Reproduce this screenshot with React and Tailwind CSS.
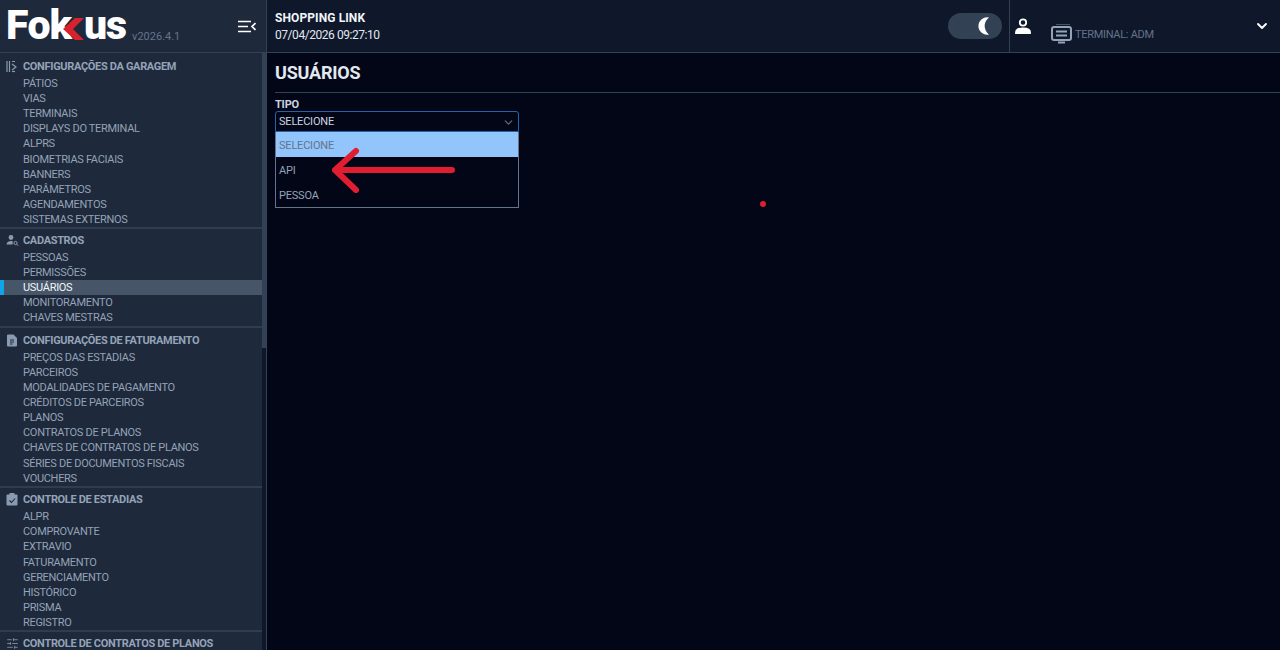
import React from "react";
import { ChevronDown, SlidersHorizontal } from "lucide-react";

const sections = [
  {
    title: "CONFIGURAÇÕES DA GARAGEM",
    icon: "garage",
    cls: "pt-[6px]",
    items: ["PÁTIOS", "VIAS", "TERMINAIS", "DISPLAYS DO TERMINAL", "ALPRS", "BIOMETRIAS FACIAIS", "BANNERS", "PARÂMETROS", "AGENDAMENTOS", "SISTEMAS EXTERNOS"],
  },
  {
    title: "CADASTROS",
    icon: "people",
    cls: "border-t-2 border-[#2f3d52] pt-[3.9px]",
    items: ["PESSOAS", "PERMISSÕES", "USUÁRIOS", "MONITORAMENTO", "CHAVES MESTRAS"],
  },
  {
    title: "CONFIGURAÇÕES DE FATURAMENTO",
    icon: "doc",
    cls: "border-t-2 border-[#2f3d52] pt-[5.3px]",
    items: ["PREÇOS DAS ESTADIAS", "PARCEIROS", "MODALIDADES DE PAGAMENTO", "CRÉDITOS DE PARCEIROS", "PLANOS", "CONTRATOS DE PLANOS", "CHAVES DE CONTRATOS DE PLANOS", "SÉRIES DE DOCUMENTOS FISCAIS", "VOUCHERS"],
  },
  {
    title: "CONTROLE DE ESTADIAS",
    icon: "check",
    cls: "border-t-2 border-[#2f3d52] pt-[4.4px]",
    items: ["ALPR", "COMPROVANTE", "EXTRAVIO", "FATURAMENTO", "GERENCIAMENTO", "HISTÓRICO", "PRISMA", "REGISTRO"],
  },
  {
    title: "CONTROLE DE CONTRATOS DE PLANOS",
    icon: "sliders",
    cls: "border-t-2 border-[#2f3d52] pt-[3.6px]",
    items: [],
  },
];

const SectionIcon = ({ type }) => {
  if (type === "garage")
    return (
      <svg width="13" height="13" viewBox="0 0 13 13" fill="none" stroke="#8a9bb0" strokeWidth="1.2">
        <path d="M1 1v11M3.5 1v11M6 1.5h3M6 4l4 3-4 3" />
        <path d="M6 11.5h3" />
      </svg>
    );
  if (type === "people")
    return (
      <svg width="13" height="13" viewBox="0 0 13 13" fill="#8a9bb0">
        <circle cx="5" cy="3.5" r="2.4" />
        <path d="M0.5 10.5c0-2.4 2-3.6 4.5-3.6 .6 0 1.1 .1 1.6 .2v3.4z" />
        <circle cx="9.5" cy="9" r="1.6" fill="none" stroke="#8a9bb0" />
        <path d="M10.7 10.2l1.6 1.6" stroke="#8a9bb0" />
      </svg>
    );
  if (type === "doc")
    return (
      <svg width="12" height="13" viewBox="0 0 12 13">
        <path d="M2 0.5h5.5l3.5 3.5v7.5a1 1 0 0 1-1 1H2a1 1 0 0 1-1-1v-10a1 1 0 0 1 1-1z" fill="#8a9bb0" />
        <path d="M4 6h4M4 8h4M4 10h2.5" stroke="#1e293b" strokeWidth="1" />
      </svg>
    );
  if (type === "check")
    return (
      <svg width="12" height="13" viewBox="0 0 12 13">
        <rect x="0.5" y="1.5" width="11" height="11" rx="1" fill="#8a9bb0" />
        <rect x="3.5" y="0" width="5" height="2.5" rx="0.5" fill="#8a9bb0" />
        <path d="M3.5 7.5l2 2 3.5-4" stroke="#1e293b" strokeWidth="1.1" fill="none" />
      </svg>
    );
  return <SlidersHorizontal size={13} color="#8a9bb0" strokeWidth={1.5} />;
};

const Logo = () => (
  <div className="flex items-end mb-[2px] -ml-[2px]">
    <div className="flex items-end h-[42px] text-white font-['Roboto',sans-serif] font-black text-[41px] leading-[42px]">
      <span>F</span>
      <span className="-ml-[1px]">o</span>
      <span className="-ml-[1px]">k</span>
      <svg width="21" height="22" viewBox="0 0 21 22" className="-ml-[9px] mb-[6px]">
        <path d="M21 0h-9L0 11l12 11h9L10 11z" fill="#d8232f" />
      </svg>
      <span>u</span>
      <span className="-ml-[1px]">s</span>
    </div>
    <span className="text-[11px] leading-none text-[#64748b] ml-[5px] mb-[4px]">v2026.4.1</span>
  </div>
);

export default function App() {
  return (
    <div className="h-[650px] w-[1280px] overflow-hidden flex flex-col bg-[#020617] font-['Roboto',sans-serif]">
      {/* ================= HEADER ================= */}
      <div className="h-[53px] flex shrink-0 bg-[#0f172a] border-b border-[#334155]">
        <div className="w-[267px] shrink-0 bg-[#1e293b] border-r border-[#334155] flex items-center justify-between pl-2 pr-[10px]">
          <Logo />
          <svg width="18" height="13" viewBox="0 0 18 13" fill="none" stroke="#fff" strokeWidth="1.7">
            <path d="M0 1.5h13M0 6.5h10M0 11.5h13M17.5 3l-3.5 3.5 3.5 3.5" />
          </svg>
        </div>
        <div className="flex-1 flex items-center justify-between pl-2">
          <div className="text-[12px] leading-[17px] pt-[2px]">
            <div className="font-bold text-[#f1f5f9] tracking-[0.1px]">SHOPPING LINK</div>
            <div className="text-[#e2e8f0] tracking-[-0.45px]">07/04/2026 09:27:10</div>
          </div>
          <div className="flex items-center h-full">
            <div className="w-[54px] h-[26px] rounded-full bg-[#334155] flex items-center justify-end pr-[10px] mr-[7px]">
              <svg width="14" height="18" viewBox="0 0 14 18">
                <path d="M11 0.5A8.7 8.7 0 1 0 11 17.5A10.5 10.5 0 0 1 11 0.5z" fill="#fff" />
              </svg>
            </div>
            <div className="h-full w-[271px] border-l border-[#334155] flex pl-[5px] pr-[10px]">
              <svg width="16" height="16" viewBox="0 0 16 16" className="mt-[18px]" fill="none" stroke="#fff" strokeWidth="1.8">
                <circle cx="8" cy="4.5" r="3.2" />
                <path d="M1 15v-1c0-2.4 3-3.6 7-3.6s7 1.2 7 3.6v1z" fill="#fff" />
              </svg>
              <div className="flex items-center ml-[20px] mt-[24px] h-[21px]">
                <svg width="21" height="21" viewBox="0 0 21 21" fill="none" stroke="#94a3b8" strokeWidth="2">
                  <path d="M5 0.5h14" stroke="#475569" strokeWidth="1" />
                  <rect x="1" y="3" width="19" height="13" rx="2" />
                  <path d="M5 7.5h11M5 11.5h11" />
                  <path d="M7 18.5h7" />
                </svg>
                <span className="text-[11px] text-[#64748b] ml-[3px] mt-[1px] tracking-[-0.3px]">TERMINAL: ADM</span>
              </div>
              <ChevronDown size={16} color="#fff" strokeWidth={2.8} className="ml-auto mt-[18px]" />
            </div>
          </div>
        </div>
      </div>

      <div className="flex-1 flex min-h-0">
        {/* ================= SIDEBAR ================= */}
        <div className="w-[267px] shrink-0 bg-[#1e293b] border-r border-[#334155] flex overflow-hidden">
          <div className="w-[262px] shrink-0">
            {sections.map((s) => (
              <div key={s.title} className={s.cls}>
                <div className="flex items-center h-[15px] pl-[6px] mb-[2px] leading-none">
                  <span className="w-[17px] shrink-0 flex items-center">
                    <SectionIcon type={s.icon} />
                  </span>
                  <span className="text-[11px] font-bold text-[#94a3b8] tracking-[-0.33px]">{s.title}</span>
                </div>
                {s.items.map((it) => {
                  const active = it === "USUÁRIOS";
                  return (
                    <div
                      key={it}
                      className={
                        active
                          ? "h-[15.11px] leading-[15px] text-[11px] tracking-[-0.3px] pl-[23px] bg-[#475569] text-[#f1f5f9] relative"
                          : "h-[15.11px] leading-[15px] text-[11px] tracking-[-0.3px] pl-[23px] text-[#94a3b8]"
                      }
                    >
                      {active && <span className="absolute left-0 top-0 h-full w-[4px] bg-[#0ea5e9]" />}
                      {it}
                    </div>
                  );
                })}
              </div>
            ))}
          </div>
          <div className="flex-1 bg-[#0f172a]">
            <div className="h-[295px] bg-[#334155]" />
          </div>
        </div>

        {/* ================= CONTENT ================= */}
        <div className="flex-1 pl-2 relative">
          <div className="h-[40px] border-b border-[#334155] flex items-center">
            <h1 className="text-[18px] font-bold text-[#e2e8f0] leading-none tracking-[-0.2px]">USUÁRIOS</h1>
          </div>
          <div className="mt-[5px] w-[244px] relative">
            <div className="text-[11px] font-bold text-[#cbd5e1] leading-[13px] tracking-[-0.2px]">TIPO</div>
            <div className="h-[21px] pt-[1px] border border-[#2563a8] rounded-t-[3px] flex items-center justify-between pl-[3px] pr-[3px] text-[11px] tracking-[-0.2px] text-[#cbd5e1]">
              SELECIONE
              <ChevronDown size={13} color="#64748b" />
            </div>
            <div className="border border-[#64748b] border-t-0 text-[11px] tracking-[-0.2px]">
              <div className="h-[25px] pl-[3px] pt-[3px] flex items-center bg-[#93c5fd] text-[#64748b]">SELECIONE</div>
              <div className="h-[25px] pl-[3px] pt-[4px] flex items-center text-[#94a3b8]">API</div>
              <div className="h-[25px] pl-[3px] pt-[4px] flex items-center text-[#94a3b8]">PESSOA</div>
            </div>
            <svg width="126" height="46" viewBox="0 0 126 46" fill="none" className="absolute left-[57px] top-[49px]">
              <path d="M3 23H120M3 23L24 4M3 23L24 43" stroke="#e11d32" strokeWidth="6" strokeLinecap="round" strokeLinejoin="round" />
            </svg>
          </div>
          <span className="absolute left-[493px] top-[148px] w-[6px] h-[6px] rounded-full bg-[#e11d32]" />
        </div>
      </div>
    </div>
  );
}
